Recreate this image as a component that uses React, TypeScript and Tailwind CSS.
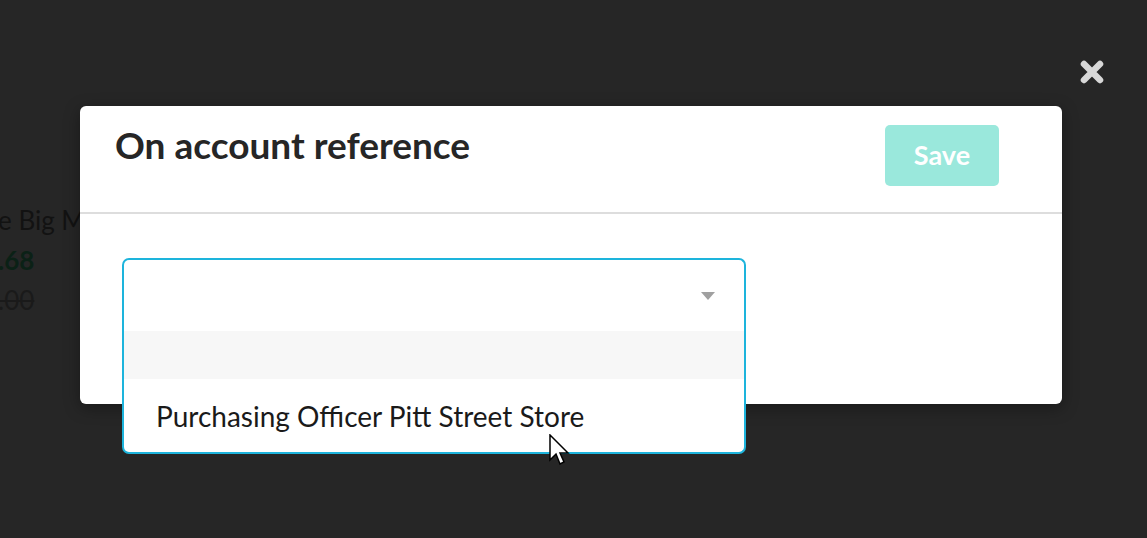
import React from 'react';

const lato = { fontFamily: 'Lato, "Liberation Sans", sans-serif' };

function CloseIcon() {
  return (
    <svg width="26" height="26" viewBox="0 0 26 26" className="text-[#d8d8d8]">
      <path d="M5 5 L21 21 M21 5 L5 21" stroke="currentColor" strokeWidth="6.5" strokeLinecap="round" />
    </svg>
  );
}

function Caret() {
  return (
    <svg width="16" height="10" viewBox="0 0 16 10">
      <path d="M1 1 H15 L8 9 Z" fill="#a0a0a0" />
    </svg>
  );
}

export default function App() {
  return (
    <div className="relative w-[1147px] h-[538px] overflow-hidden bg-[#262626]" style={lato}>
      {/* page behind the overlay */}
      <div className="pt-[200px] flex flex-col text-[26px] leading-[40px] -ml-[2px]">
        <span className="text-[#121212]">e Big Mouth</span>
        <span className="font-bold text-[#0b2116]">.68</span>
        <span className="text-[#1a1a1a] line-through">.00</span>
      </div>

      <button className="absolute left-[1079px] top-[59px]">
        <CloseIcon />
      </button>

      {/* modal */}
      <div className="absolute left-[80px] top-[106px] w-[982px] h-[298px] bg-white rounded-[6px] shadow-[0_4px_16px_rgba(0,0,0,0.35)]">
        <div className="flex items-start justify-between pl-[35px] pr-[63px] pt-[19px] h-[108px] border-b-2 border-[#dddddd]">
          <h2 className="-mt-[3px] text-[37px] font-bold text-[#262626] leading-[46px]">On account reference</h2>
          <button className="w-[114px] h-[61px] rounded-[5px] bg-[#9ae8dc] text-white text-[27px] font-bold">
            Save
          </button>
        </div>

        <div className="relative ml-[42px] mt-[44px] w-[624px]">
          <div className="h-[73px] flex items-center justify-end pr-[28px] border-2 border-b-0 border-[#1db4dc] rounded-t-[7px] bg-white">
            <Caret />
          </div>
          <div className="absolute left-0 top-[73px] w-full border-2 border-t-0 border-[#1db4dc] rounded-b-[7px] bg-white overflow-hidden">
            <div className="h-[48px] bg-[#f7f7f7]" />
            <div className="h-[73px] flex items-center pl-[32px] text-[28px] text-[#1a1a1a]">
              Purchasing Officer Pitt Street Store
            </div>
          </div>
        </div>
      </div>

      {/* mouse pointer */}
      <svg className="absolute left-[549px] top-[434px]" width="22" height="36" viewBox="0 0 22 36">
        <path d="M1 1 L1 26 L7 20 L11 30 L15 28 L11 19 L19 19 Z" fill="#ffffff" stroke="#000" strokeWidth="1.5" strokeLinejoin="miter" />
      </svg>
    </div>
  );
}
